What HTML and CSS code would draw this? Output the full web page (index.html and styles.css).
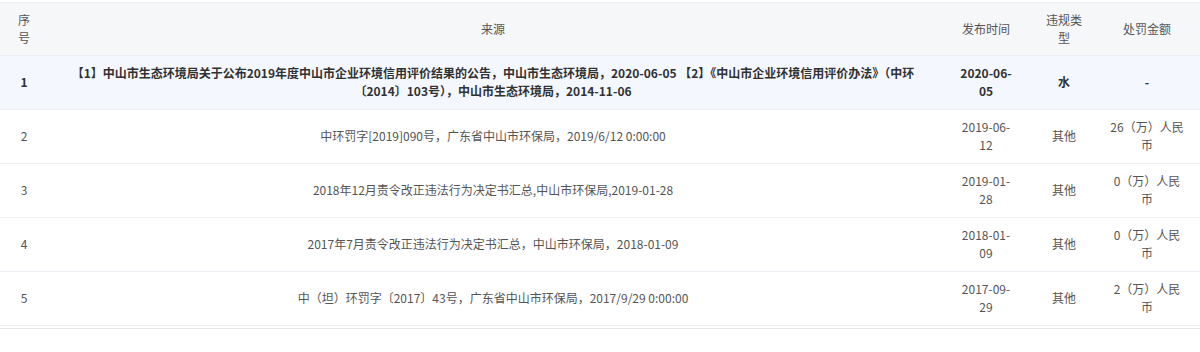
FILE: index.html
```html
<!DOCTYPE html>
<html lang="zh-CN">
<head>
<meta charset="utf-8">
<title>处罚记录</title>
<link rel="stylesheet" href="styles.css">
</head>
<body>
<div class="wrap">
  <table class="tbl">
    <colgroup>
      <col class="c-seq"><col class="c-src"><col class="c-date"><col class="c-type"><col class="c-amt">
    </colgroup>
    <thead>
      <tr>
        <th class="seq">序号</th>
        <th class="src">来源</th>
        <th class="date">发布时间</th>
        <th class="type">违规类型</th>
        <th class="amt">处罚金额</th>
      </tr>
    </thead>
    <tbody>
      <tr class="hl">
        <td class="seq">1</td>
        <td class="src">【1】中山市生态环境局关于公布2019年度中山市企业环境信用评价结果的公告，中山市生态环境局，2020-06-05 【2】《中山市企业环境信用评价办法》（中环〔2014〕103号），中山市生态环境局，2014-11-06</td>
        <td class="date">2020-06-05</td>
        <td class="type">水</td>
        <td class="amt">-</td>
      </tr>
      <tr>
        <td class="seq">2</td>
        <td class="src">中环罚字[2019]090号，广东省中山市环保局，2019/6/12 0:00:00</td>
        <td class="date">2019-06-12</td>
        <td class="type">其他</td>
        <td class="amt">26（万）人民币</td>
      </tr>
      <tr>
        <td class="seq">3</td>
        <td class="src">2018年12月责令改正违法行为决定书汇总,中山市环保局,2019-01-28</td>
        <td class="date">2019-01-28</td>
        <td class="type">其他</td>
        <td class="amt">0（万）人民币</td>
      </tr>
      <tr>
        <td class="seq">4</td>
        <td class="src">2017年7月责令改正违法行为决定书汇总，中山市环保局，2018-01-09</td>
        <td class="date">2018-01-09</td>
        <td class="type">其他</td>
        <td class="amt">0（万）人民币</td>
      </tr>
      <tr>
        <td class="seq">5</td>
        <td class="src">中（坦）环罚字〔2017〕43号，广东省中山市环保局，2017/9/29 0:00:00</td>
        <td class="date">2017-09-29</td>
        <td class="type">其他</td>
        <td class="amt">2（万）人民币</td>
      </tr>
    </tbody>
  </table>
</div>
</body>
</html>
```
FILE: styles.css
```css
html, body {
  margin: 0;
  padding: 0;
  background: #ffffff;
}
body {
  font-family: "Noto Sans CJK SC", "Noto Sans", sans-serif;
  font-size: 12px;
  color: #555555;
}
.wrap {
  margin-top: 2px;
  border-bottom: 1px solid #e6e6e6;
  padding-bottom: 2px;
}
.tbl {
  width: 1200px;
  border-collapse: collapse;
  table-layout: fixed;
}
.c-seq { width: 48px; }
.c-src { width: 890px; }
.c-date { width: 96px; }
.c-type { width: 60px; }
.c-amt { width: 106px; }

.tbl th,
.tbl td {
  text-align: center;
  vertical-align: middle;
  line-height: 18px;
  border-bottom: 1px solid #ebeef5;
  word-break: normal;
  overflow-wrap: anywhere;
}
.tbl th {
  font-weight: normal;
  color: #555555;
  background: #f6f7f9;
  border-top: 1px solid #ebeef5;
  padding-top: 8px;
  padding-bottom: 8px;
}
.tbl td {
  padding-top: 8px;
  padding-bottom: 9px;
}
.tbl tr.hl td {
  background: #f4f8fe;
  font-weight: bold;
  color: #303133;
}
.seq { padding-left: 14px; padding-right: 14px; }
.src { padding-left: 12px; padding-right: 12px; }
.date { padding-left: 20px; padding-right: 20px; }
.type { padding-left: 10px; padding-right: 10px; }
.amt { padding-left: 15px; padding-right: 15px; }
```
